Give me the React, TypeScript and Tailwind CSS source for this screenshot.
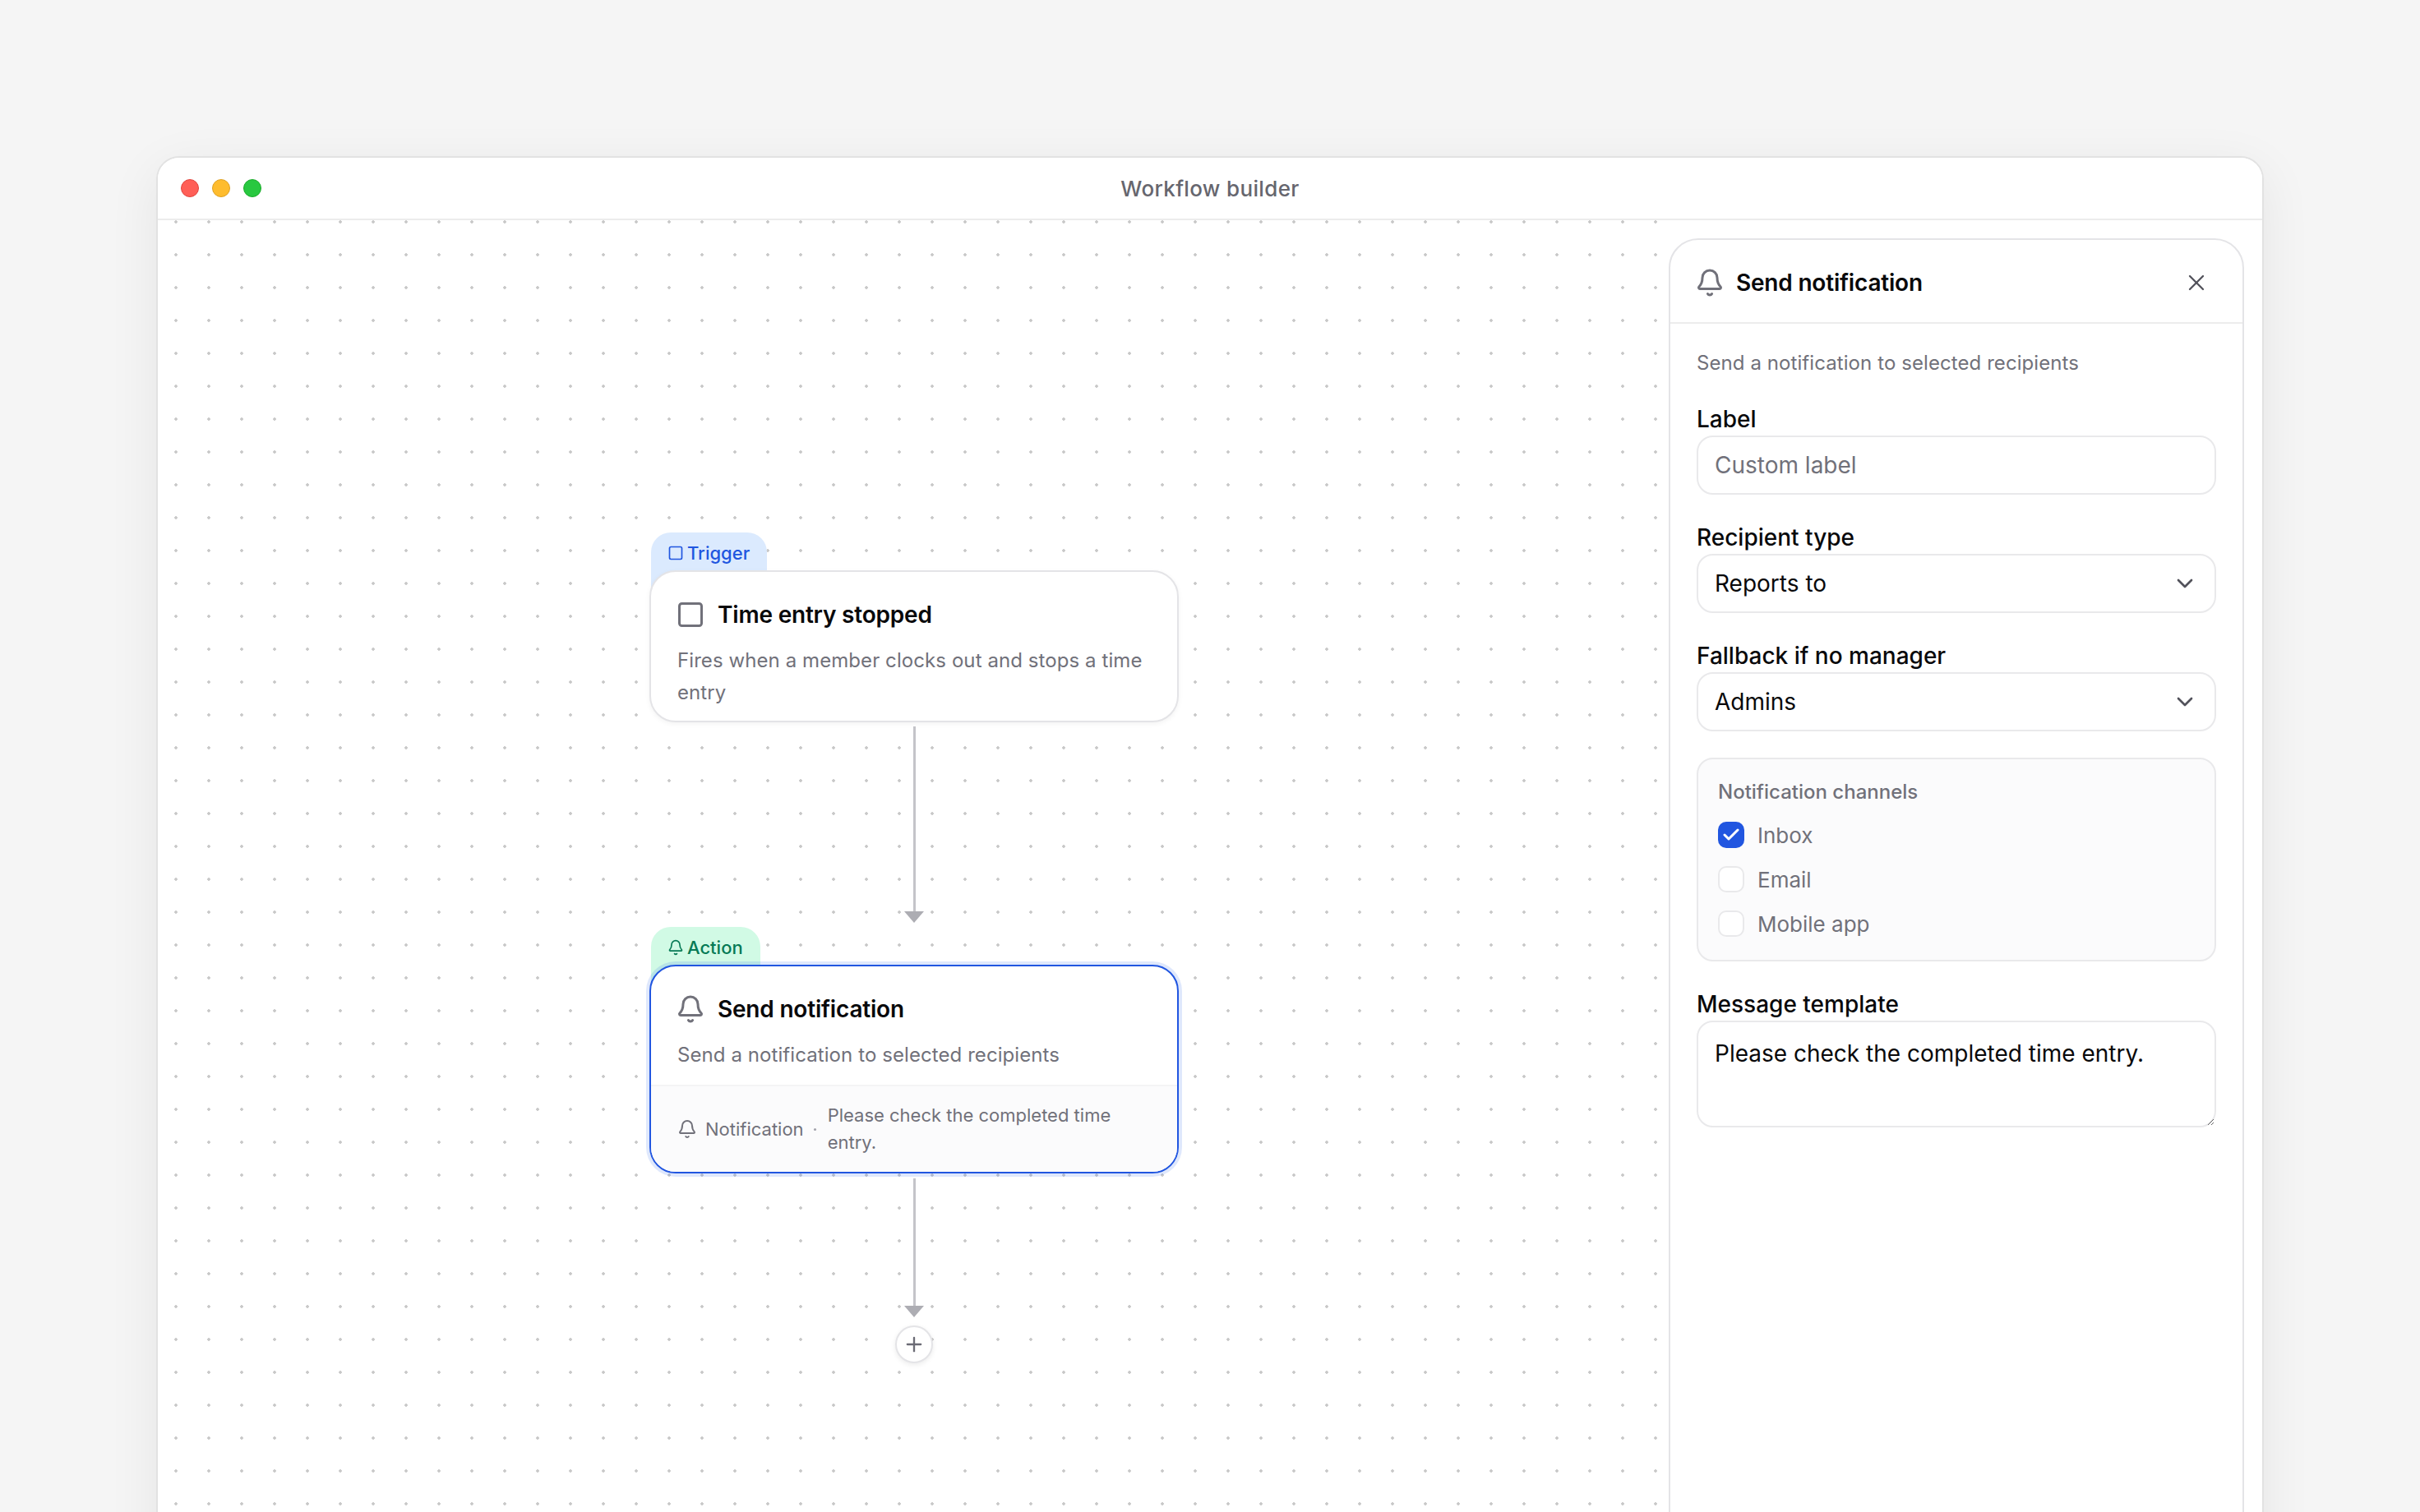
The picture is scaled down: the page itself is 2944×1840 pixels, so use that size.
import { Bell, Check, ChevronDown, Plus, Square, X } from "lucide-react";

function Field({ label, children }: { label: string; children: React.ReactNode }) {
  return (
    <div className="flex flex-col">
      <label className="h-[40px] text-[28px] leading-[40px] font-medium text-[#09090b]">{label}</label>
      {children}
    </div>
  );
}

function SelectBox({ value }: { value: string }) {
  return (
    <div className="flex h-[72px] items-center justify-between rounded-[20px] border-2 border-[#e9e9eb] bg-white pr-[20px] pl-[20px] text-[28px] text-[#09090b]">
      <span>{value}</span>
      <ChevronDown className="size-[32px] text-[#52525b]" strokeWidth={2} />
    </div>
  );
}

function Channel({ label, checked }: { label: string; checked?: boolean }) {
  return (
    <div className="flex h-[40px] items-center gap-[16px] text-[26px] text-[#71717a]">
      <span
        className={
          checked
            ? "flex size-[32px] items-center justify-center rounded-[10px] bg-[#2156e0]"
            : "size-[32px] rounded-[10px] border-2 border-[#e9e9eb] bg-white"
        }
      >
        {checked && <Check className="size-[24px] text-white" strokeWidth={3} />}
      </span>
      {label}
    </div>
  );
}

function Connector({ top, height }: { top: number; height: number }) {
  return (
    <div className="absolute left-[908px] flex w-[24px] flex-col items-center" style={{ top, height }}>
      <div className="w-[3px] flex-1 bg-[#c4c4c9]" />
      <div className="h-0 w-0 border-x-[12px] border-t-[14px] border-x-transparent border-t-[#adadb3]" />
    </div>
  );
}

export default function App() {
  return (
    <div className="h-[1840px] overflow-hidden bg-[#f5f5f5] px-[190px] pt-[190px] font-[Inter,sans-serif]">
      <div className="flex h-[1760px] flex-col overflow-hidden rounded-t-[28px] border-2 border-[#e2e2e2] bg-white shadow-[0_16px_64px_rgba(0,0,0,0.07)]">
        <div className="relative flex h-[76px] shrink-0 items-center justify-center border-b-2 border-[#ececec] bg-white">
          <div className="absolute left-[28px] flex gap-[16px]">
            <span className="size-[22px] rounded-full border border-[#e0443e] bg-[#ff5f57]" />
            <span className="size-[22px] rounded-full border border-[#dea123] bg-[#febc2e]" />
            <span className="size-[22px] rounded-full border border-[#1aab29] bg-[#28c840]" />
          </div>
          <span className="text-[26px] font-medium tracking-[0.35px] text-[#66666e]">Workflow builder</span>
        </div>

        <div className="flex flex-1">
          <div className="relative flex-1 bg-[radial-gradient(circle_at_20px_20px,#c8c8c8_1.5px,transparent_2px)] bg-[size:40px_40px] bg-[position:2px_-18px]">
            {/* trigger node */}
            <div className="absolute top-[380px] left-[600px] flex h-[80px] items-start rounded-t-[24px] bg-[#dbeafe] pt-[9px] pr-[21px] pl-[20px] text-[22px] leading-[32px] font-medium text-[#2056e0]">
              <Square className="mt-[6px] mr-[4px] size-[20px]" strokeWidth={2} />
              Trigger
            </div>
            <div className="absolute top-[426px] left-[598px] w-[644px] rounded-[32px] border-2 border-[#e4e4e7] bg-white px-[32px] pt-[28px] pb-[15px] shadow-[0_2px_6px_rgba(0,0,0,0.05)]">
              <div className="flex items-center gap-[15px]">
                <Square className="-ml-[2px] size-[36px] text-[#71717a]" strokeWidth={2} />
                <span className="text-[28px] leading-[48px] font-semibold tracking-[-0.2px] text-[#09090b]">Time entry stopped</span>
              </div>
              <p className="mt-[12px] text-[24px] leading-[39px] tracking-[0.08px] text-[#71717a]">
                Fires when a member clocks out and stops a time entry
              </p>
            </div>

            <Connector top={616} height={239} />

            {/* action node */}
            <div className="absolute top-[860px] left-[600px] flex h-[80px] items-start rounded-t-[24px] bg-[#d1fae5] pt-[9px] pr-[21px] pl-[20px] text-[22px] leading-[32px] font-medium text-[#067a55]">
              <Bell className="mt-[6px] mr-[4px] size-[20px]" strokeWidth={2} />
              Action
            </div>
            <div className="absolute top-[906px] left-[598px] w-[644px] overflow-hidden rounded-[32px] border-2 border-[#2156e0] bg-white shadow-[0_0_0_4px_rgba(37,99,235,0.15)]">
              <div className="px-[32px] pt-[28px] pb-[17px]">
                <div className="flex items-center gap-[15px]">
                  <Bell className="-ml-[2px] size-[36px] text-[#71717a]" strokeWidth={2} />
                  <span className="text-[28px] leading-[48px] font-semibold tracking-[-0.2px] text-[#09090b]">Send notification</span>
                </div>
                <p className="mt-[12px] text-[24px] leading-[39px] tracking-[0.08px] text-[#71717a]">
                  Send a notification to selected recipients
                </p>
              </div>
              <div className="flex items-center gap-[8px] border-t-2 border-[#f4f4f5] bg-[#fbfbfc] px-[32px] py-[19px] text-[22px] leading-[33px] text-[#71717a]">
                <Bell className="size-[24px] shrink-0" strokeWidth={2} />
                <span className="ml-[2px] shrink-0">Notification</span>
                <span className="mx-[4px] size-[3px] shrink-0 rounded-full bg-[#a1a1aa]" />
                <span className="ml-[2px]">Please check the completed time entry.</span>
              </div>
            </div>

            <Connector top={1166} height={169} />

            <div className="absolute top-[1345px] left-[897px] flex size-[46px] items-center justify-center rounded-full border-2 border-[#e4e4e7] bg-white text-[#6b6b75] shadow-[0_2px_6px_rgba(0,0,0,0.08)]">
              <Plus className="size-[28px]" strokeWidth={2} />
            </div>
          </div>

          {/* side panel */}
          <div className="shrink-0 bg-white pt-[22px] pr-[22px]">
            <aside className="flex h-[1700px] w-[700px] flex-col rounded-t-[36px] border-2 border-[#e4e4e7] bg-white">
              <div className="flex h-[102px] shrink-0 items-center justify-between border-b-2 border-[#ececec] pt-[4px] pr-[40px] pl-[30px]">
                <div className="flex items-center gap-[14px]">
                  <Bell className="size-[36px] text-[#71717a]" strokeWidth={2} />
                  <span className="text-[28px] font-semibold tracking-[-0.2px] text-[#09090b]">Send notification</span>
                </div>
                <X className="size-[32px] text-[#52525b]" strokeWidth={1.75} />
              </div>
              <div className="flex flex-col gap-[32px] px-[32px] pt-[32px]">
                <p className="text-[24px] leading-[32px] tracking-[0.08px] text-[#71717a]">Send a notification to selected recipients</p>
                <Field label="Label">
                  <input
                    placeholder="Custom label"
                    className="h-[72px] rounded-[20px] border-2 border-[#e9e9eb] px-[20px] text-[28px] text-[#09090b] outline-none placeholder:text-[#71717a]"
                  />
                </Field>
                <Field label="Recipient type">
                  <SelectBox value="Reports to" />
                </Field>
                <Field label="Fallback if no manager">
                  <SelectBox value="Admins" />
                </Field>
                <div className="flex flex-col rounded-[20px] border-2 border-[#e9e9eb] bg-[#fbfbfc] p-[24px]">
                  <span className="mb-[16px] text-[24px] leading-[32px] font-medium text-[#71717a]">Notification channels</span>
                  <div className="flex flex-col gap-[14px]">
                    <Channel label="Inbox" checked />
                    <Channel label="Email" />
                    <Channel label="Mobile app" />
                  </div>
                </div>
                <Field label="Message template">
                  <textarea
                    defaultValue="Please check the completed time entry."
                    className="h-[130px] rounded-[20px] border-2 border-[#e9e9eb] px-[20px] py-[18px] text-[28px] leading-[40px] text-[#09090b] outline-none"
                  />
                </Field>
              </div>
            </aside>
          </div>
        </div>
      </div>
    </div>
  );
}
